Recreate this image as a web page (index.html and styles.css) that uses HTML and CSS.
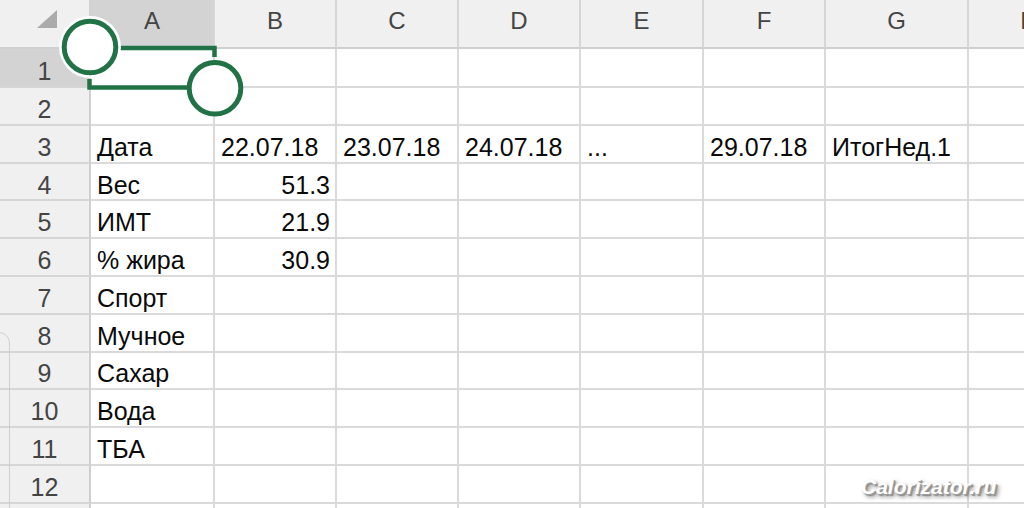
FILE: index.html
```html
<!DOCTYPE html>
<html lang="ru">
<head>
<meta charset="utf-8">
<title>Лист</title>
<link rel="stylesheet" href="styles.css">
</head>
<body>
<div class="sheet">
  <div class="grid">
    <div class="corner"><svg class="tri" viewBox="0 0 89 47" width="89" height="47"><polygon points="57,10 57,28 37,28" fill="#ababab"/></svg></div>
    <div class="ch sel">A</div><div class="ch">B</div><div class="ch">C</div><div class="ch">D</div><div class="ch">E</div><div class="ch">F</div><div class="ch">G</div><div class="ch">H</div>

    <div class="rh sel">1</div><div class="c"></div><div class="c"></div><div class="c"></div><div class="c"></div><div class="c"></div><div class="c"></div><div class="c"></div><div class="c"></div>
    <div class="rh">2</div><div class="c"></div><div class="c"></div><div class="c"></div><div class="c"></div><div class="c"></div><div class="c"></div><div class="c"></div><div class="c"></div>
    <div class="rh">3</div><div class="c">Дата</div><div class="c">22.07.18</div><div class="c">23.07.18</div><div class="c">24.07.18</div><div class="c">...</div><div class="c">29.07.18</div><div class="c">ИтогНед.1</div><div class="c"></div>
    <div class="rh">4</div><div class="c">Вес</div><div class="c num">51.3</div><div class="c"></div><div class="c"></div><div class="c"></div><div class="c"></div><div class="c"></div><div class="c"></div>
    <div class="rh">5</div><div class="c">ИМТ</div><div class="c num">21.9</div><div class="c"></div><div class="c"></div><div class="c"></div><div class="c"></div><div class="c"></div><div class="c"></div>
    <div class="rh">6</div><div class="c">% жира</div><div class="c num">30.9</div><div class="c"></div><div class="c"></div><div class="c"></div><div class="c"></div><div class="c"></div><div class="c"></div>
    <div class="rh">7</div><div class="c">Спорт</div><div class="c"></div><div class="c"></div><div class="c"></div><div class="c"></div><div class="c"></div><div class="c"></div><div class="c"></div>
    <div class="rh">8</div><div class="c">Мучное</div><div class="c"></div><div class="c"></div><div class="c"></div><div class="c"></div><div class="c"></div><div class="c"></div><div class="c"></div>
    <div class="rh">9</div><div class="c">Сахар</div><div class="c"></div><div class="c"></div><div class="c"></div><div class="c"></div><div class="c"></div><div class="c"></div><div class="c"></div>
    <div class="rh">10</div><div class="c">Вода</div><div class="c"></div><div class="c"></div><div class="c"></div><div class="c"></div><div class="c"></div><div class="c"></div><div class="c"></div>
    <div class="rh">11</div><div class="c">ТБА</div><div class="c"></div><div class="c"></div><div class="c"></div><div class="c"></div><div class="c"></div><div class="c"></div><div class="c"></div>
    <div class="rh">12</div><div class="c"></div><div class="c"></div><div class="c"></div><div class="c"></div><div class="c"></div><div class="c"></div><div class="c"></div><div class="c"></div>
    <div class="rh"></div><div class="c"></div><div class="c"></div><div class="c"></div><div class="c"></div><div class="c"></div><div class="c"></div><div class="c"></div><div class="c"></div>
  </div>

  <svg class="selection" viewBox="0 0 260 130" width="260" height="130">
    <path d="M100 48 H214.5 V57" fill="none" stroke="#217346" stroke-width="4.5"/>
    <path d="M89.5 79 V87.5 H200" fill="none" stroke="#217346" stroke-width="4.5"/>
    <circle cx="90" cy="47" r="31" fill="#fff"/>
    <circle cx="90" cy="47" r="25.8" fill="#fff" stroke="#217346" stroke-width="5"/>
    <circle cx="215" cy="88.3" r="25.8" fill="#fff" stroke="#217346" stroke-width="5"/>
  </svg>

  <div class="panel-edge"></div>
  <div class="watermark">Calorizator.ru</div>
</div>
</body>
</html>
```

FILE: styles.css
```css
html, body {
  margin: 0;
  padding: 0;
  overflow: hidden;
  background: #ffffff;
}

.sheet {
  position: relative;
  width: 1024px;
  height: 508px;
  overflow: hidden;
}

.grid {
  display: grid;
  grid-template-columns: 91px 124px 122px 122px 122px 123px 122px 143px 122px;
  grid-template-rows: 49px 39px repeat(12, 37.8px);
  width: 1091px;
  font-family: "Liberation Sans", Arial, sans-serif;
}

.grid > div {
  box-sizing: border-box;
  border-right: 2px solid #dadada;
  border-bottom: 2px solid #dadada;
  display: flex;
  align-items: center;
  overflow: hidden;
  white-space: nowrap;
}

.corner {
  background: #f0f0f0;
  border-bottom-color: #cfcfcf !important;
  border-right-color: #d2d2d2 !important;
}

.tri {
  display: block;
}

.ch {
  background: #f0f0f0;
  justify-content: center;
  font-size: 24px;
  color: #444444;
  padding-bottom: 5px;
  border-bottom-color: #cfcfcf !important;
  border-right-color: #d6d6d6 !important;
}

.rh {
  background: #f0f0f0;
  justify-content: center;
  font-size: 25px;
  color: #444444;
  padding-top: 7px;
  border-right-color: #cfcfcf !important;
  border-bottom-color: #d6d6d6 !important;
}

.sel {
  background: #d3d3d3;
}

.c {
  background: #ffffff;
  font-size: 25px;
  color: #0a0a0a;
  padding: 7px 5px 0 6px;
}

.num {
  justify-content: flex-end;
}

.selection {
  position: absolute;
  left: 0;
  top: 0;
}

.panel-edge {
  position: absolute;
  left: -30px;
  top: 332px;
  width: 38px;
  height: 220px;
  border: 1.5px solid #cfcfcf;
  border-radius: 11px;
  background: transparent;
}

.watermark {
  position: absolute;
  left: 861px;
  top: 475px;
  font-family: "Liberation Sans", Arial, sans-serif;
  font-weight: bold;
  font-style: italic;
  font-size: 21px;
  color: #ffffff;
  text-shadow: 1px 1px 0 #a0a0a0, 2px 2px 1px #8a8a8a, 3px 3px 4px rgba(0, 0, 0, 0.5);
}
```
